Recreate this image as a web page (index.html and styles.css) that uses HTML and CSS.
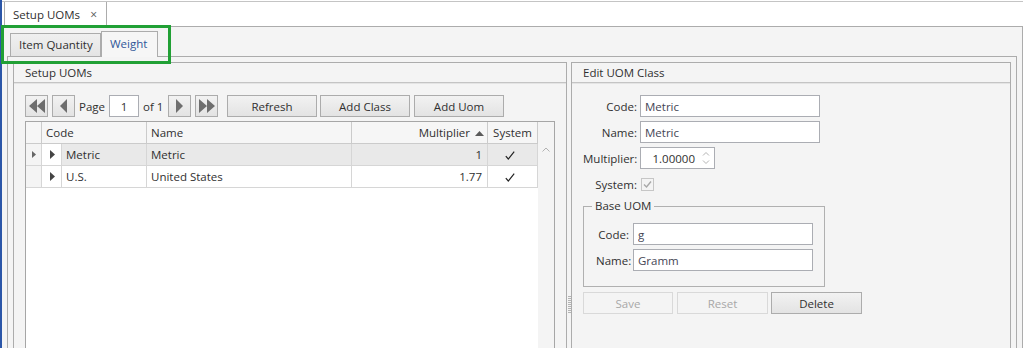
FILE: index.html
```html
<!DOCTYPE html>
<html lang="en">
<head>
    <meta charset="utf-8">
    <title>Setup UOMs</title>
    <link rel="stylesheet" href="styles.css">
</head>
<body>
<div class="window">
    <div class="doc-strip">
        <div class="doc-tab">Setup UOMs <span class="close">&times;</span></div>
    </div>
    <div class="doc-body">
        <div class="tab-strip">
            <div class="tab item-qty">Item Quantity</div>
            <div class="tab weight selected">Weight</div>
        </div>
        <div class="tab-panel">
            <section class="group setup">
                <header class="group-head">Setup UOMs</header>
                <div class="group-body">
                    <div class="pager">
                        <button class="nav"><svg width="16" height="14" viewBox="0 0 16 14"><path d="M8 0L0 7l8 7zM16 0L8 7l8 7z"/></svg></button>
                        <button class="nav"><svg width="7" height="14" viewBox="0 0 7 14"><path d="M7 0L0 7l7 7z"/></svg></button>
                        <span class="page-label">Page</span>
                        <input class="page-input" type="text" value="1">
                        <span class="of-label">of 1</span>
                        <button class="nav"><svg width="7" height="14" viewBox="0 0 7 14"><path d="M0 0l7 7-7 7z"/></svg></button>
                        <button class="nav"><svg width="16" height="14" viewBox="0 0 16 14"><path d="M0 0l8 7-8 7zM8 0l8 7-8 7z"/></svg></button>
                        <button class="btn refresh">Refresh</button>
                        <button class="btn add-class">Add Class</button>
                        <button class="btn add-uom">Add Uom</button>
                    </div>
                    <div class="grid">
                        <div class="grid-main">
                            <div class="grid-row head">
                                <div class="cell rowhdr"></div>
                                <div class="cell code-h">Code</div>
                                <div class="cell">Name</div>
                                <div class="cell num">Multiplier <svg class="sort" width="9" height="5" viewBox="0 0 9 5"><path d="M0 5L4.5 0 9 5z"/></svg></div>
                                <div class="cell center">System</div>
                            </div>
                            <div class="grid-row current">
                                <div class="cell rowhdr"><svg width="4" height="7" viewBox="0 0 4 7"><path d="M0 0l4 3.5L0 7z"/></svg></div>
                                <div class="cell expander"><svg width="5" height="9" viewBox="0 0 5 9"><path d="M0 0l5 4.5L0 9z"/></svg></div>
                                <div class="cell">Metric</div>
                                <div class="cell">Metric</div>
                                <div class="cell num">1</div>
                                <div class="cell check"><svg class="tick" width="10" height="9" viewBox="0 0 10 9"><path d="M0.8 5.2L3.3 8 9.2 0.6"/></svg></div>
                            </div>
                            <div class="grid-row">
                                <div class="cell rowhdr"></div>
                                <div class="cell expander"><svg width="5" height="9" viewBox="0 0 5 9"><path d="M0 0l5 4.5L0 9z"/></svg></div>
                                <div class="cell">U.S.</div>
                                <div class="cell">United States</div>
                                <div class="cell num">1.77</div>
                                <div class="cell check"><svg class="tick" width="10" height="9" viewBox="0 0 10 9"><path d="M0.8 5.2L3.3 8 9.2 0.6"/></svg></div>
                            </div>
                        </div>
                        <div class="vscroll">
                            <svg class="scroll-up" width="8" height="5" viewBox="0 0 8 5"><path d="M0.5 4.5L4 1l3.5 3.5"/></svg>
                        </div>
                    </div>
                </div>
            </section>
            <div class="splitter"><span class="grip"></span></div>
            <section class="group edit">
                <header class="group-head">Edit UOM Class</header>
                <div class="group-body">
                    <div class="form">
                        <label>Code:</label>
                        <input type="text" value="Metric">
                        <label>Name:</label>
                        <input type="text" value="Metric">
                        <label>Multiplier:</label>
                        <div class="spinner">
                            <span class="spin-value">1.00000</span>
                            <svg width="8" height="16" viewBox="0 0 8 16"><path d="M1 5.5l3-3 3 3M1 10.5l3 3 3-3"/></svg>
                        </div>
                        <label>System:</label>
                        <span class="checkbox"><svg width="11" height="11" viewBox="0 0 11 11"><path d="M2 5.5l2.5 2.5L9 2.5"/></svg></span>
                    </div>
                    <fieldset class="base-uom">
                        <legend>Base UOM</legend>
                        <div class="form small">
                            <label>Code:</label>
                            <input type="text" value="g">
                            <label>Name:</label>
                            <input type="text" value="Gramm">
                        </div>
                    </fieldset>
                    <div class="actions">
                        <button class="btn save" disabled>Save</button>
                        <button class="btn reset" disabled>Reset</button>
                        <button class="btn delete">Delete</button>
                    </div>
                </div>
            </section>
        </div>
    </div>
    <div class="highlight"></div>
</div>
</body>
</html>
```

FILE: styles.css
```css
* {
    box-sizing: border-box;
}
html, body {
    margin: 0;
    height: 100%;
    overflow: hidden;
    background: #fff;
}
body {
    font-family: "Segoe UI", "Open Sans", sans-serif;
    font-size: 11.5px;
    color: #303030;
}
button, input {
    font: inherit;
    color: inherit;
    margin: 0;
}
.window {
    position: relative;
    height: 372px;
    border-left: 2px solid #2b56a8;
    display: flex;
    flex-direction: column;
}

/* document tab */
.doc-strip {
    flex: none;
    height: 25px;
    margin-top: 1px;
    border-top: 1px solid #c4c4c4;
    padding-left: 2px;
    display: flex;
}
.doc-tab {
    width: 103px;
    height: 24px;
    border-left: 1px solid #acacac;
    border-right: 1px solid #acacac;
    padding: 0 9px 0 8px;
    display: flex;
    align-items: center;
    background: #fff;
}
.doc-tab .close {
    margin-left: auto;
    font-size: 12px;
    color: #555;
}
.doc-body {
    flex: 1;
    border-top: 1px solid #acacac;
    border-right: 1px solid #acacac;
    background: #f4f4f4;
    padding: 0 5px;
    display: flex;
    flex-direction: column;
}

/* inner tabs */
.tab-strip {
    flex: none;
    height: 29px;
    display: flex;
    align-items: flex-end;
    padding-left: 3px;
}
.tab {
    height: 23px;
    border: 1px solid #acacac;
    border-bottom: 0;
    background: linear-gradient(#f0f0f0, #e4e4e4);
    padding-left: 8px;
    line-height: 21px;
}
.item-qty {
    width: 91px;
}
.weight {
    width: 57px;
}
.tab.selected {
    position: relative;
    z-index: 1;
    height: 26px;
    margin-bottom: -1px;
    background: #f6f6f6;
    color: #2f5699;
    line-height: 24px;
}
.tab-panel {
    flex: 1;
    border: 1px solid #acacac;
    border-bottom: 0;
    padding: 5px 5px 0;
    display: flex;
}

/* group boxes */
.group {
    border: 1px solid #acacac;
    display: flex;
    flex-direction: column;
}
.group.setup {
    width: 554px;
}
.group.edit {
    flex: 1;
}
.group-head {
    flex: none;
    height: 20px;
    border-bottom: 1px solid #c4c4c4;
    box-shadow: 0 1px 0 #e4e4e4;
    padding-left: 11px;
    line-height: 19px;
}
.group-body {
    flex: 1;
    display: flex;
    flex-direction: column;
    padding: 12px 11px 0;
}
.splitter {
    width: 4px;
    display: flex;
    justify-content: center;
}
.grip {
    margin-top: 234px;
    width: 3px;
    height: 17px;
    background: repeating-linear-gradient(#b4b4b4 0 1px, transparent 1px 2px);
}

/* pager */
.pager {
    flex: none;
    height: 22px;
    margin-bottom: 4px;
    display: flex;
    align-items: center;
}
.nav, .btn {
    height: 22px;
    border: 1px solid #acacac;
    background: linear-gradient(#f2f2f2, #e3e3e3);
    padding: 0;
}
.nav {
    width: 23px;
    margin-right: 4px;
    display: flex;
    align-items: center;
    justify-content: center;
}
.nav svg {
    fill: #6e6e6e;
}
.page-label {
    width: 30px;
}
.page-input {
    width: 30px;
    height: 22px;
    border: 1px solid #abadb3;
    background: #fff;
    text-align: center;
    padding: 0;
}
.of-label {
    width: 29px;
    padding-left: 4px;
}
.btn {
    width: 90px;
    text-align: center;
}
.refresh {
    margin-left: 5px;
}
.add-class {
    margin-left: 3px;
}
.add-uom {
    margin-left: 4px;
}

/* data grid */
.grid {
    flex: 1;
    display: flex;
    border: 1px solid #a6a6a6;
    background: #fff;
}
.grid-main {
    width: 512px;
}
.grid-row {
    display: grid;
    grid-template-columns: 16px 20px 85px 205px 136px 50px;
    height: 22px;
}
.cell {
    border-right: 1px solid #d6d6d6;
    border-bottom: 1px solid #d6d6d6;
    padding: 0 4px;
    line-height: 21px;
    white-space: nowrap;
    overflow: hidden;
}
.head .cell {
    background: #f6f6f6;
    border-color: #cbcbcb;
}
.code-h {
    grid-column: span 2;
}
.cell.num {
    text-align: right;
    padding-right: 5px;
}
.head .cell.num {
    padding-right: 3px;
}
.cell.center {
    text-align: center;
}
.cell.check {
    padding-left: 17px;
}
.sort {
    fill: #5a5a5a;
    margin-left: 2px;
    vertical-align: 1px;
}
.rowhdr {
    background: #f4f4f4;
    padding: 0;
    display: flex;
    align-items: center;
    justify-content: center;
}
.rowhdr svg {
    fill: #666;
}
.expander {
    padding: 0 0 0 8px;
    display: flex;
    align-items: center;
}
.expander svg {
    fill: #444;
}
.current .cell:nth-child(n+3) {
    background: #e9e9e9;
}
.tick {
    fill: none;
    stroke: #222;
    stroke-width: 1.2;
    vertical-align: -1px;
}
.vscroll {
    width: 16px;
    background: #f4f4f4;
    padding-top: 25px;
    display: flex;
    justify-content: center;
    align-items: flex-start;
}
.scroll-up {
    fill: none;
    stroke: #b2b2b2;
}

/* edit form */
.form {
    display: grid;
    grid-template-columns: 54px 180px;
    column-gap: 3px;
    row-gap: 4px;
    grid-auto-rows: 22px;
    align-items: center;
}
.form label {
    text-align: right;
}
.form input {
    height: 22px;
    border: 1px solid #abadb3;
    background: #fff;
    padding: 0 4px;
    color: #454555;
}
.spinner {
    width: 75px;
    height: 22px;
    border: 1px solid #abadb3;
    background: #fff;
    display: flex;
    align-items: center;
    justify-content: flex-end;
    padding-right: 4px;
}
.spin-value {
    margin-right: 7px;
}
.spinner svg {
    fill: none;
    stroke: #b4b4b4;
}
.checkbox {
    width: 13px;
    height: 13px;
    margin-left: 1px;
    border: 1px solid #c6c6c6;
    background: #f4f4f4;
    display: flex;
}
.checkbox svg {
    fill: none;
    stroke: #a8a8a8;
    stroke-width: 1.4;
}
.base-uom {
    width: 242px;
    margin: 3px 0 0;
    border: 1px solid #b0b0b0;
    padding: 9px 11px 15px 12px;
}
.base-uom legend {
    padding: 0 3px;
    margin-left: -4px;
    line-height: 16px;
}
.form.small {
    grid-template-columns: 33px 180px;
    column-gap: 4px;
}
.actions {
    margin-top: 5px;
    display: flex;
}
.reset {
    width: 91px;
    margin-left: 4px;
}
.delete {
    width: 91px;
    margin-left: 3px;
}
.btn:disabled {
    background: #f4f4f4;
    border-color: #d9d9d9;
    color: #a8a8a8;
}

/* annotation box drawn over the tab strip */
.highlight {
    position: absolute;
    left: -1px;
    top: 25px;
    width: 170px;
    height: 39px;
    border: 3px solid #21a035;
}
```
